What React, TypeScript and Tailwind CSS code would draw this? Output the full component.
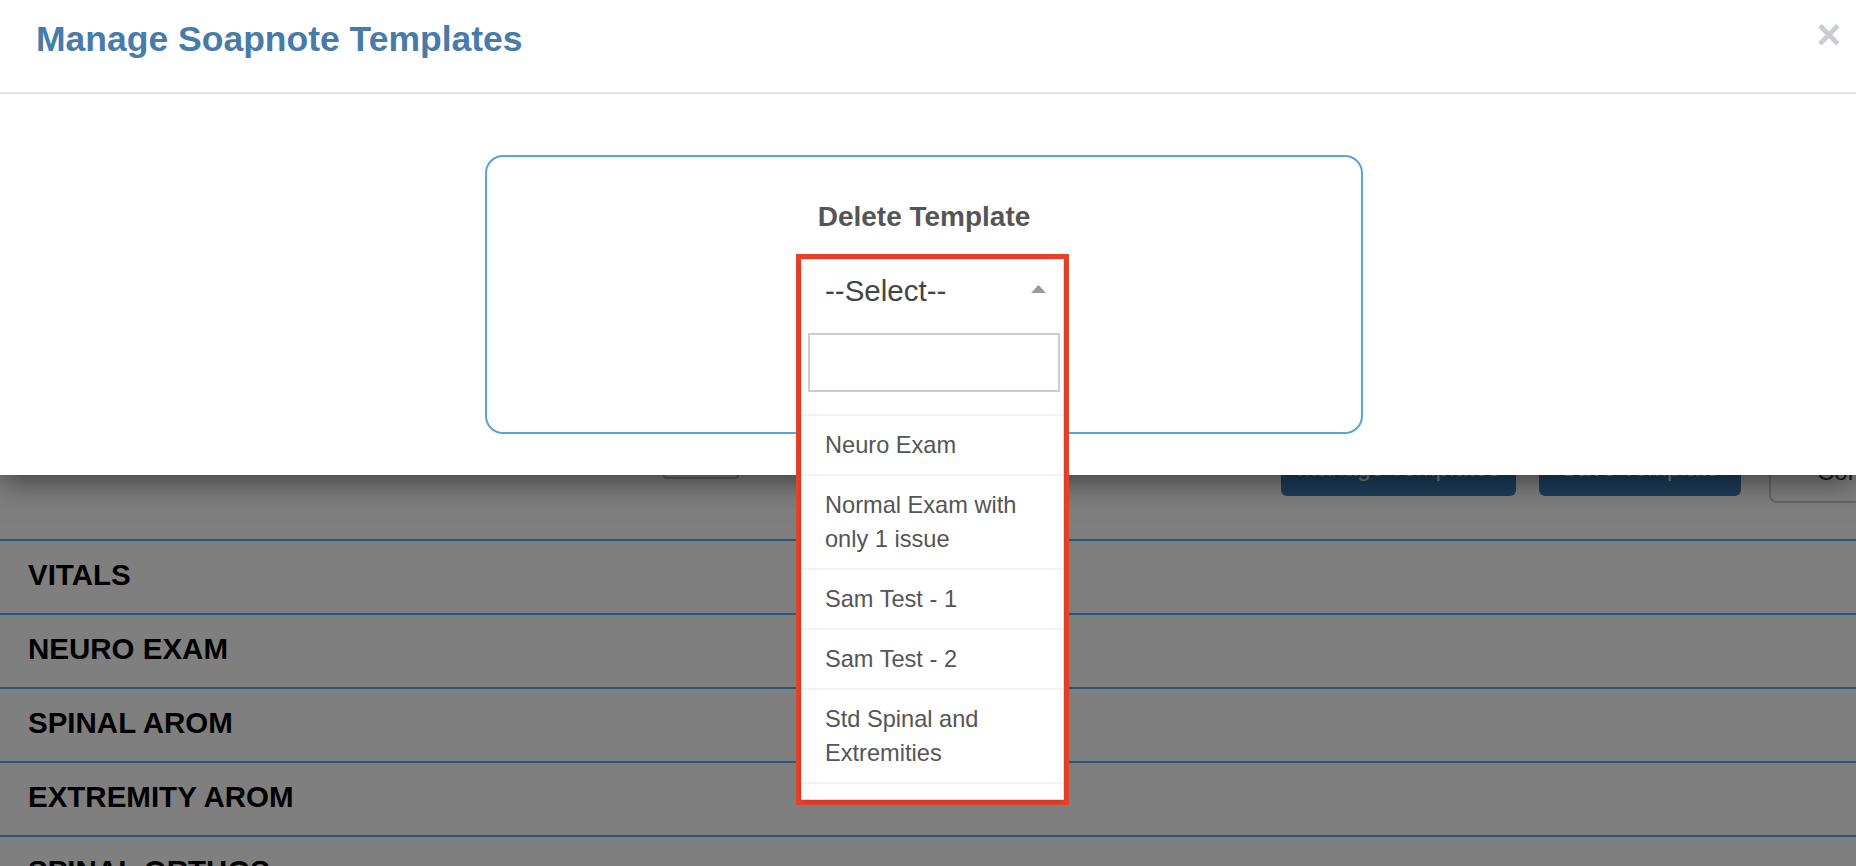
import React from 'react';

const templates = [
  'Neuro Exam',
  'Normal Exam with only 1 issue',
  'Sam Test - 1',
  'Sam Test - 2',
  'Std Spinal and Extremities',
  'Upper Extremity',
];

const sections = ['VITALS', 'NEURO EXAM', 'SPINAL AROM', 'EXTREMITY AROM', 'SPINAL ORTHOS'];

function BackgroundPage() {
  return (
    <div className="pt-[440px]">
      {/* toolbar, mostly hidden behind the modal */}
      <div className="flex h-[99px] items-start overflow-hidden">
        <div className="ml-[663px] h-[39px] w-[76px] shrink-0 rounded-[4px] border-2 border-[#bbbbbb] bg-white" />
        <button className="ml-[542px] h-[56px] w-[235px] shrink-0 rounded-[6px] bg-[#3c7ab4] text-[24px] text-white">
          Manage Templates
        </button>
        <button className="ml-[23px] h-[56px] w-[202px] shrink-0 rounded-[6px] bg-[#3c7ab4] text-[24px] text-white">
          Save Template
        </button>
        <button className="ml-[28px] h-[63px] w-[180px] shrink-0 rounded-[8px] border-2 border-[#cccccc] bg-white pl-[46px] text-left text-[24px] text-[#333333]">
          Continue
        </button>
      </div>

      {/* soap note sections */}
      <div>
        {sections.map((s) => (
          <div
            key={s}
            className="flex h-[74px] items-center border-t-2 border-[#58a8ea] px-[28px] pb-[4px] text-[29.5px] font-bold text-black"
          >
            {s}
          </div>
        ))}
      </div>
    </div>
  );
}

function TemplateDropdown() {
  return (
    <div className="absolute left-0 top-0 h-[551px] w-[273px] border-[5px] border-[#e8432a]">
      <div className="flex h-full flex-col overflow-hidden border border-[#dddddd] bg-white shadow-[0_2px_6px_rgba(0,0,0,0.15)]">
        {/* open select */}
        <div className="flex h-[62px] shrink-0 items-center justify-between pl-[23px] pr-[17px]">
          <span className="text-[29.5px] leading-none text-[#444444]">--Select--</span>
          <svg width="15" height="8" viewBox="0 0 15 8" className="mb-[4px]">
            <path d="M0 8 L7.5 0 L15 8 Z" fill="#999999" />
          </svg>
        </div>

        {/* search box */}
        <div className="shrink-0 pb-[22px] pl-[6px] pr-[3px] pt-[11px]">
          <input
            type="text"
            className="block h-[59px] w-full border-2 border-[#cccccc] bg-white outline-none"
          />
        </div>

        {/* options */}
        <ul className="border-t-2 border-[#f2f2f2]">
          {templates.map((t) => (
            <li
              key={t}
              className="border-b-2 border-[#f2f2f2] px-[23px] py-[12px] text-[23.6px] leading-[34px] text-[#555555]"
            >
              {t}
            </li>
          ))}
        </ul>
      </div>
    </div>
  );
}

export default function App() {
  return (
    <div
      className="relative h-[866px] w-full overflow-hidden bg-white"
      style={{ fontFamily: '"Liberation Sans", Arial, Helvetica, sans-serif' }}
    >
      <BackgroundPage />

      {/* backdrop */}
      <div className="absolute inset-0 bg-black/50" />

      {/* modal */}
      <div className="absolute left-0 right-0 top-0 h-[475px] bg-white shadow-[0_5px_30px_rgba(0,0,0,0.55)]">
        <div className="flex h-[94px] items-center justify-between border-b-2 border-[#e5e5e5] pl-[36px] pr-[15px]">
          <h4 className="mb-[12px] text-[35.5px] font-bold text-[#477ba9]">Manage Soapnote Templates</h4>
          <button className="mb-[22px] text-[42px] font-bold leading-none text-[#cccccc]">×</button>
        </div>

        <div className="pt-[61px]">
          <div className="ml-[485px] h-[279px] w-[878px] rounded-[18px] border-2 border-[#56a3e0] pt-[43px]">
            <h3 className="text-center text-[28px] font-bold leading-[34px] text-[#555555]">Delete Template</h3>
            <div className="relative ml-[309px] mt-[20px] h-[60px] w-[273px]">
              <TemplateDropdown />
            </div>
          </div>
        </div>
      </div>
    </div>
  );
}
